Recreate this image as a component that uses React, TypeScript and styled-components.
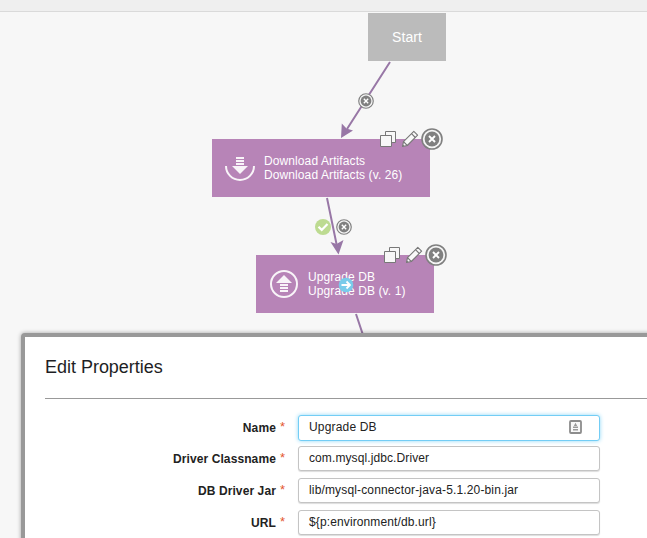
import React from "react";
import styled, { createGlobalStyle } from "styled-components";

const GlobalStyle = createGlobalStyle`
  * { box-sizing: border-box; }
  body {
    margin: 0;
    background: #f7f7f7;
    font-family: "Liberation Sans", Arial, sans-serif;
    overflow: hidden;
  }
  svg { display: block; }
`;

const Page = styled.div`
  display: flex;
  flex-direction: column;
  width: 647px;
  height: 538px;
  overflow: hidden;
`;

const TopBar = styled.header`
  flex: none;
  height: 12px;
  background: #efefef;
  border-bottom: 1px solid #dadada;
`;

const Canvas = styled.main`
  position: relative;
  flex: none;
  height: 321px;
  background: #f7f7f7;
`;

const Connectors = styled.svg`
  position: absolute;
  left: 0;
  top: 0;
`;

const Placed = styled.div<{ $x: number; $y: number }>`
  position: absolute;
  left: ${(p) => p.$x}px;
  top: ${(p) => p.$y}px;
`;

const StartNode = styled(Placed)`
  display: flex;
  align-items: center;
  justify-content: center;
  width: 78px;
  height: 48px;
  background: #bbb;
  color: #fff;
  font-size: 14px;
  letter-spacing: 0.1px;
`;

const StepNode = styled(Placed)<{ $width: number }>`
  display: flex;
  align-items: center;
  width: ${(p) => p.$width}px;
  height: 58px;
  background: #b784b7;
  color: #fff;
`;

const StepIcon = styled.div`
  flex: none;
  width: 30px;
  margin: 0 9px 0 13px;
`;

const StepText = styled.div`
  font-size: 12px;
  line-height: 14px;
  letter-spacing: 0.1px;
  white-space: nowrap;
`;

const Dialog = styled.section`
  position: relative;
  flex: none;
  width: 660px;
  height: 300px;
  margin-left: 21px;
  padding: 0 0 0 20px;
  border: 4px solid #999;
  border-radius: 4px 0 0 0;
  background: #fff;
  box-shadow: 0 0 4px rgba(0, 0, 0, 0.35);
`;

const Title = styled.h1`
  height: 62px;
  margin: 0 0 16px;
  padding-top: 19px;
  border-bottom: 1px solid #999;
  color: #1e1e24;
  font-size: 18px;
  font-weight: 400;
  line-height: 22px;
  letter-spacing: -0.02px;
`;

const Form = styled.form`
  display: grid;
  grid-template-rows: 31px 32px 32px 32px;
`;

const Row = styled.div`
  display: grid;
  grid-template-columns: 240px 302px;
  column-gap: 13px;
  align-items: start;
`;

const Label = styled.label`
  display: flex;
  justify-content: flex-end;
  color: #222;
  font-size: 12px;
  font-weight: 700;
  line-height: 26px;
  letter-spacing: 0.1px;
`;

const Required = styled.span`
  margin-left: 4px;
  color: #e4572e;
  font-size: 13px;
  font-weight: 400;
  line-height: 23px;
  letter-spacing: 0;
`;

const Field = styled.div<{ $focused: boolean; $spacing: number }>`
  display: flex;
  justify-content: space-between;
  height: ${(p) => (p.$focused ? 26 : 25)}px;
  padding: 0 17px 0 10px;
  border: 1px solid ${(p) => (p.$focused ? "#73cdf5" : "#c4c4c4")};
  border-radius: 3px;
  background: #fff;
  box-shadow: ${(p) => (p.$focused ? "0 0 4px #8ed8f8" : "0 1px 1px #ddd")};
  color: #222;
  font-size: 12px;
  line-height: 23px;
  letter-spacing: ${(p) => p.$spacing}px;
  white-space: nowrap;
`;

const Autofill = styled.svg`
  margin-top: 4px;
`;

function DownloadIcon() {
  return (
    <svg width="30" height="30" viewBox="0 0 30 30">
      <path d="M1 13a14 14 0 0 0 28 0" fill="none" stroke="#f8f4f8" strokeWidth="2" />
      <path d="M11 4h8v2h-8zM11 7h8v2h-8zM11 10h8v2h-8zM7 13h16L15 21z" fill="#f8f4f8" />
    </svg>
  );
}

function UpgradeIcon() {
  return (
    <svg width="30" height="30" viewBox="0 0 30 30">
      <circle cx="15" cy="15" r="13" fill="none" stroke="#f8f4f8" strokeWidth="2" />
      <path d="M15 6L23 14H7zM11 15h8v2h-8zM11 18h8v2h-8zM11 21h8v2h-8z" fill="#f8f4f8" />
    </svg>
  );
}

function CloseBadge({ size }: { size: number }) {
  return (
    <svg width={size} height={size} viewBox="0 0 22 22">
      <circle cx="11" cy="11" r="10" fill="#f5f5f5" stroke="#808080" strokeWidth="1.6" />
      <circle cx="11" cy="11" r="7.4" fill="#808080" />
      <path d="M8 8l6 6M14 8l-6 6" stroke="#fff" strokeWidth="1.9" />
    </svg>
  );
}

function NodeTools() {
  return (
    <svg width="64" height="22" viewBox="0 0 64 22">
      <path d="M6.5 3.500h10v11h-10z" fill="#f8f8f8" stroke="#787878" />
      <path d="M1.500 7.500h11v11h-11z" fill="#f8f8f8" stroke="#787878" />
      <g fill="#f8f8f8" stroke="#777" strokeLinejoin="round" strokeWidth="1.1">
        <path d="M23.500 18.500l1-4.800L34.800 3.400l3.800 3.800L28.300 17.500z" />
        <path d="M24.500 13.700l3.800 3.800M32.500 5.700l3.800 3.800" />
      </g>
      <path d="M23.500 18.500l.5-2 1.500 1.500z" fill="#777" />
    </svg>
  );
}

function CheckBadge() {
  return (
    <svg width="16" height="16" viewBox="0 0 16 16">
      <circle cx="8" cy="8" r="8" fill="#bddb91" />
      <path d="M3.500 7.800l3.200 3.100 5.800-6" fill="none" stroke="#fff" strokeWidth="2.2" />
    </svg>
  );
}

function ArrowBadge() {
  return (
    <svg width="16" height="16" viewBox="0 0 16 16">
      <circle cx="8" cy="8" r="7.3" fill="#79cbea" />
      <path d="M3.500 8h8M8.500 4.500L12 8l-3.500 3.500" fill="none" stroke="#fff" strokeWidth="1.800" />
    </svg>
  );
}

function AutofillIcon() {
  return (
    <Autofill width="13" height="14" viewBox="0 0 13 14">
      <rect x="1" y="1" width="11" height="12" rx="1" fill="#f8f8f8" stroke="#8c8c8c" strokeWidth="1.8" />
      <path d="M6.500 2.800L8.200 6H4.800zM4 6.500h5V8H4zM4 9h5v1.500H4z" fill="#999" />
    </Autofill>
  );
}

const fields = [
  { label: "Name", value: "Upgrade DB", spacing: 0.17 },
  { label: "Driver Classname", value: "com.mysql.jdbc.Driver", spacing: 0.1 },
  { label: "DB Driver Jar", value: "lib/mysql-connector-java-5.1.20-bin.jar", spacing: 0.15 },
  { label: "URL", value: "${p:environment/db.url}", spacing: 0.12 },
];

export default function App() {
  return (
    <>
      <GlobalStyle />
      <Page>
        <TopBar />
        <Canvas>
          <StartNode $x={368} $y={1}>Start</StartNode>
          <StepNode $x={212} $y={127} $width={218}>
            <StepIcon><DownloadIcon /></StepIcon>
            <StepText>Download Artifacts<br />Download Artifacts (v. 26)</StepText>
          </StepNode>
          <StepNode $x={256} $y={243} $width={178}>
            <StepIcon><UpgradeIcon /></StepIcon>
            <StepText>Upgrade DB<br />Upgrade DB (v. 1)</StepText>
          </StepNode>
          <Connectors width="647" height="321" viewBox="0 12 647 321">
            <path d="M390 62L347 129M327 198L336.500 244M356 314L363 335" fill="none" stroke="#9877a6" strokeWidth="2" />
            <path d="M341 138L341.800 123.500L346.500 128.500L353 130.500zM338.500 254.500L330.500 242L336.500 244L343.500 240z" fill="#9877a6" />
          </Connectors>
          <Placed $x={358} $y={81}><CloseBadge size={16} /></Placed>
          <Placed $x={315} $y={207}><CheckBadge /></Placed>
          <Placed $x={336} $y={207}><CloseBadge size={16} /></Placed>
          <Placed $x={379} $y={116}><NodeTools /></Placed>
          <Placed $x={421} $y={116}><CloseBadge size={22} /></Placed>
          <Placed $x={383} $y={232}><NodeTools /></Placed>
          <Placed $x={425} $y={232}><CloseBadge size={22} /></Placed>
          <Placed $x={338} $y={265}><ArrowBadge /></Placed>
        </Canvas>
        <Dialog>
          <Title>Edit Properties</Title>
          <Form>
            {fields.map((field, index) => (
              <Row key={field.label}>
                <Label>
                  {field.label}<Required>*</Required>
                </Label>
                <Field $focused={index === 0} $spacing={field.spacing}>
                  <span>{field.value}</span>
                  {index === 0 && <AutofillIcon />}
                </Field>
              </Row>
            ))}
          </Form>
        </Dialog>
      </Page>
    </>
  );
}
